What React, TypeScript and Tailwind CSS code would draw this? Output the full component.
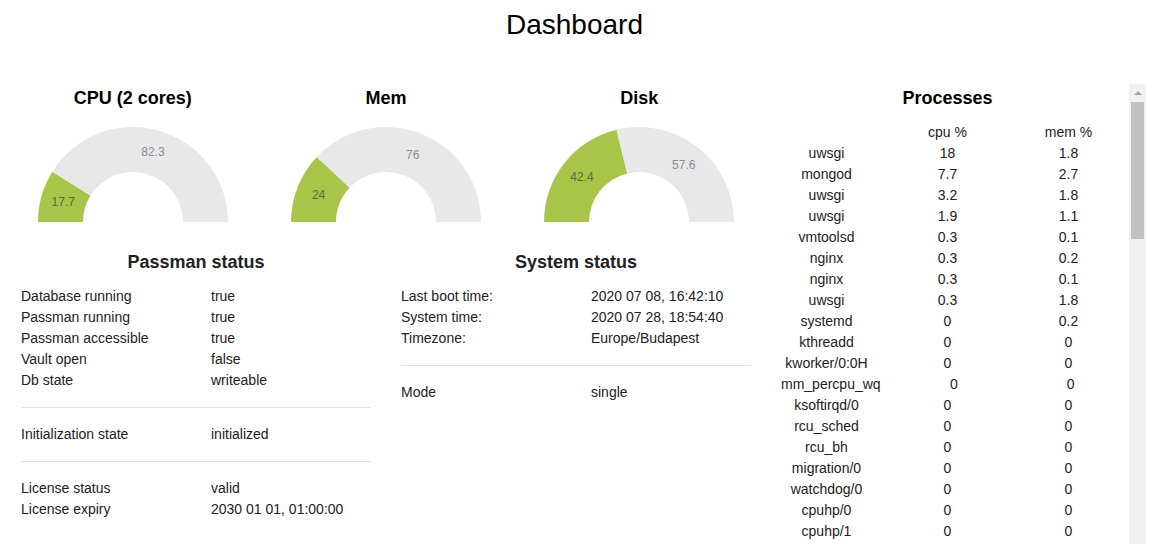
import React from 'react';

type Gauge = { title: string; used: number };

const gauges: Gauge[] = [
  { title: 'CPU (2 cores)', used: 17.7 },
  { title: 'Mem', used: 24 },
  { title: 'Disk', used: 42.4 },
];

const passmanRows: [string, string][][] = [
  [
    ['Database running', 'true'],
    ['Passman running', 'true'],
    ['Passman accessible', 'true'],
    ['Vault open', 'false'],
    ['Db state', 'writeable'],
  ],
  [['Initialization state', 'initialized']],
  [
    ['License status', 'valid'],
    ['License expiry', '2030 01 01, 01:00:00'],
  ],
];

const systemRows: [string, string][][] = [
  [
    ['Last boot time:', '2020 07 08, 16:42:10'],
    ['System time:', '2020 07 28, 18:54:40'],
    ['Timezone:', 'Europe/Budapest'],
  ],
  [['Mode', 'single']],
];

const processes: [string, string, string][] = [
  ['uwsgi', '18', '1.8'],
  ['mongod', '7.7', '2.7'],
  ['uwsgi', '3.2', '1.8'],
  ['uwsgi', '1.9', '1.1'],
  ['vmtoolsd', '0.3', '0.1'],
  ['nginx', '0.3', '0.2'],
  ['nginx', '0.3', '0.1'],
  ['uwsgi', '0.3', '1.8'],
  ['systemd', '0', '0.2'],
  ['kthreadd', '0', '0'],
  ['kworker/0:0H', '0', '0'],
  ['mm_percpu_wq', '0', '0'],
  ['ksoftirqd/0', '0', '0'],
  ['rcu_sched', '0', '0'],
  ['rcu_bh', '0', '0'],
  ['migration/0', '0', '0'],
  ['watchdog/0', '0', '0'],
  ['cpuhp/0', '0', '0'],
  ['cpuhp/1', '0', '0'],
];

const R = 95;
const r = 50;
const CX = 95;
const CY = 113;

// angle in degrees, 0 = left, 180 = right, going over the top
const pt = (rad: number, deg: number) => {
  const a = (deg * Math.PI) / 180;
  return [CX - rad * Math.cos(a), CY - rad * Math.sin(a)];
};

const segment = (a0: number, a1: number) => {
  const [x0, y0] = pt(R, a0);
  const [x1, y1] = pt(R, a1);
  const [x2, y2] = pt(r, a1);
  const [x3, y3] = pt(r, a0);
  return `M${x0} ${y0} A${R} ${R} 0 0 1 ${x1} ${y1} L${x2} ${y2} A${r} ${r} 0 0 0 ${x3} ${y3} Z`;
};

const GaugeChart = ({ used }: { used: number }) => {
  const free = Math.round((100 - used) * 10) / 10;
  const split = (used / 100) * 180;
  const [lx1, ly1] = pt((R + r) / 2, split / 2);
  const [lx2, ly2] = pt((R + r) / 2, (split + 180) / 2);
  return (
    <svg width={190} height={113} viewBox="0 0 190 113" className="mx-auto block">
      <path d={segment(0, split)} fill="#a8c54a" />
      <path d={segment(split, 180)} fill="#e8e8e8" />
      <text x={lx1} y={ly1} textAnchor="middle" dominantBaseline="central" fontSize={12} fill="#5f6a36">
        {used}
      </text>
      <text x={lx2} y={ly2} textAnchor="middle" dominantBaseline="central" fontSize={12} fill="#8b8b9c">
        {free}
      </text>
    </svg>
  );
};

const StatusBlock = ({ title, groups }: { title: string; groups: [string, string][][] }) => (
  <div>
    <h2 className="text-center text-[18px] font-bold leading-[21px] mb-[13px]">{title}</h2>
    {groups.map((group, gi) => (
      <div key={gi}>
        {gi > 0 && <hr className="my-4 border-0 border-t border-[#e2e2e2]" />}
        {group.map(([label, value]) => (
          <div key={label} className="flex leading-[21px] text-[14px]">
            <span className="w-[190px]">{label}</span>
            <span>{value}</span>
          </div>
        ))}
      </div>
    ))}
  </div>
);

export default function App() {
  return (
    <div className="w-[1166px] h-[544px] overflow-hidden bg-white text-[#222] font-['Liberation_Sans',Arial,sans-serif]">
      <h1 className="w-[1149px] pt-[9px] text-center text-[28px] leading-[32px] text-black">Dashboard</h1>

      <div className="mt-[43px] flex pl-[6px]">
        {/* left side: gauges + status */}
        <div className="w-[760px]">
          <div className="grid grid-cols-3">
            {gauges.map((g) => (
              <div key={g.title}>
                <h2 className="pt-[4px] text-center text-[18px] font-bold leading-[21px] text-black">{g.title}</h2>
                <GaugeChart used={g.used} />
              </div>
            ))}
          </div>
          <div className="mt-[30px] grid grid-cols-2 gap-[30px] px-[15px]">
            <StatusBlock title="Passman status" groups={passmanRows} />
            <StatusBlock title="System status" groups={systemRows} />
          </div>
        </div>

        {/* right side: processes */}
        <div className="flex w-[380px]">
          <div className="w-[363px] text-[14px]">
            <h2 className="pt-[4px] mb-[13px] text-center text-[18px] font-bold leading-[21px] text-black">Processes</h2>
            <div className="flex leading-[21px]">
              <div className="flex-1 px-[15px]" />
              <div className="flex-1 px-[15px] text-center">cpu %</div>
              <div className="flex-1 px-[15px] text-center">mem %</div>
            </div>
            {processes.map(([name, cpu, mem], i) => (
              <div key={i} className="flex leading-[21px]">
                <div className="flex-1 whitespace-nowrap px-[15px] text-center">{name}</div>
                <div className="flex-1 whitespace-nowrap px-[15px] text-center">{cpu}</div>
                <div className="flex-1 whitespace-nowrap px-[15px] text-center">{mem}</div>
              </div>
            ))}
          </div>
          <div className="relative h-[520px] w-[17px] bg-[#f1f1f1]">
            <div className="flex h-[17px] items-center justify-center">
              <div className="h-0 w-0 border-x-[4px] border-b-[4px] border-x-transparent border-b-[#a3a3a3]" />
            </div>
            <div className="mx-[2px] mt-px h-[137px] bg-[#c1c1c1]" />
          </div>
        </div>
      </div>
    </div>
  );
}
